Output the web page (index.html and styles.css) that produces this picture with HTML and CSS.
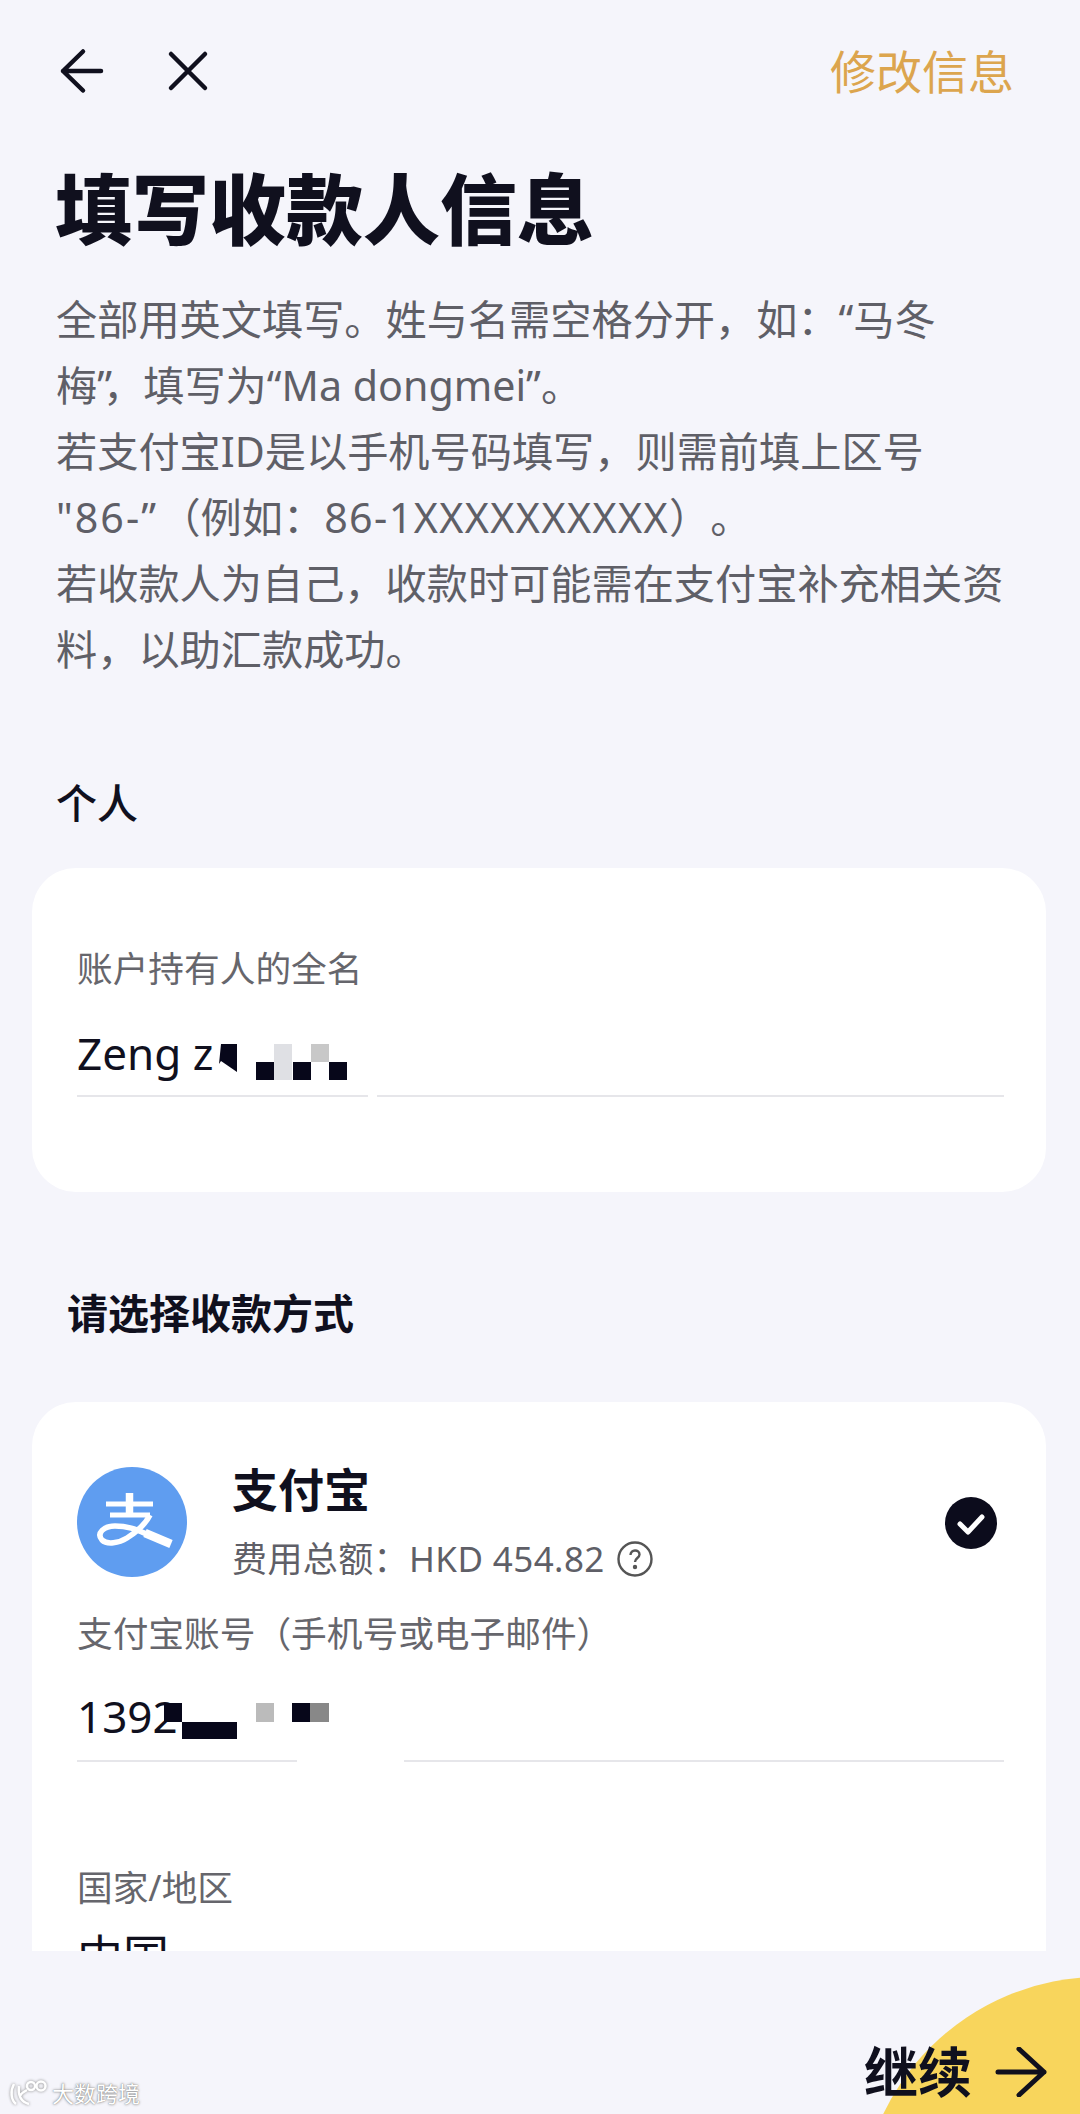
FILE: index.html
```html
<!DOCTYPE html>
<html lang="zh-CN">
<head>
  <meta charset="UTF-8">
  <title>填写收款人信息</title>
  <link rel="stylesheet" href="styles.css">
</head>
<body>
  <div class="page">
    <main class="content">
      <header class="topbar">
        <div class="topbar-icons">
          <svg class="icon-back" viewBox="0 0 48 48" width="48" height="48" fill="none" stroke="#10101e" stroke-width="4.5" stroke-linecap="round" stroke-linejoin="round"><path d="M5 24H43M25 4.5 5 24l20 19.5"/></svg>
          <svg class="icon-close" viewBox="0 0 48 48" width="48" height="48" fill="none" stroke="#10101e" stroke-width="4.5" stroke-linecap="round"><path d="M7 7 41 41M41 7 7 41"/></svg>
        </div>
        <span class="edit-link">修改信息</span>
      </header>

      <h1 class="title">填写收款人信息</h1>
      <p class="intro">全部用英文填写。姓与名需空格分开，如：“马冬<br>梅<span class="tight">”，</span>填写为“Ma dongmei”。<br>若支付宝ID是以手机号码填写，则需前填上区号<br><span class="quoted">"86-”</span><span class="gap-paren">（</span>例如：<span class="spaced">86-1XXXXXXXXXX</span><span class="untrimmed">）。</span><br>若收款人为自己，收款时可能需在支付宝补充相关资<br>料，以助汇款成功。</p>

      <h2 class="section-title">个人</h2>
      <section class="card card-person">
        <div class="field-label">账户持有人的全名</div>
        <div class="field-value value-name">
          <span>Zeng z</span>
          <svg class="mosaic" viewBox="0 0 128 36" width="128" height="36">
            <path d="M2 0H18V28L2 17 0 20Z" fill="#07071a"/>
            <rect x="37" y="18" width="18" height="18" fill="#07071a"/>
            <rect x="55" y="0" width="18" height="36" fill="#dfe0e4"/>
            <rect x="74" y="18" width="18" height="18" fill="#07071a"/>
            <rect x="92" y="0" width="18" height="18" fill="#c8c8c8"/>
            <rect x="110" y="18" width="18" height="18" fill="#07071a"/>
          </svg>
        </div>
        <div class="field-line line-name"><i></i><i></i></div>
      </section>

      <h2 class="section-title section-method">请选择收款方式</h2>
      <section class="card card-method">
        <div class="method">
          <svg class="alipay" viewBox="0 0 110 110" width="110" height="110">
            <circle cx="55" cy="55" r="55" fill="#5f9df0"/>
            <g fill="none" stroke="#fff">
              <path d="M29 37H76M33 48H73" stroke-width="5"/>
              <path d="M52.500 26V46" stroke-width="7.5"/>
              <path d="M73 48C68 58 58 66 50 71 42 76 30 78 25 73 19 66 27 59 38 59 52 59 60 63 72 68" stroke-width="5.500"/>
              <path d="M68 66 94 77" stroke-width="8.500"/>
            </g>
          </svg>
          <div class="method-info">
            <div class="method-name">支付宝</div>
            <div class="method-fee">费用总额：HKD 454.82
              <svg class="icon-help" viewBox="0 0 36 36" width="36" height="36" fill="none" stroke="#555" stroke-width="2.4"><circle cx="18" cy="18" r="16.5"/><path d="M13.5 14c0-6 9-6 9-.5 0 3.500-4.500 3.500-4.500 7.500"/><circle cx="18" cy="26" r="1" fill="#555"/></svg>
            </div>
          </div>
          <svg class="icon-check" viewBox="0 0 52 52" width="52" height="52"><circle cx="26" cy="26" r="26" fill="#0c0c1c"/><path d="M15 27l8 8 14-15" fill="none" stroke="#fff" stroke-width="5" stroke-linecap="round" stroke-linejoin="round"/></svg>
        </div>
        <div class="field-label label-account">支付宝账号（手机号或电子邮件）</div>
        <div class="field-value value-account">
          <span>1392</span>
          <svg class="mosaic mosaic-account" viewBox="0 0 165 36" width="165" height="36">
            <rect x="0" y="0" width="18" height="19" fill="#07071a"/>
            <rect x="18" y="19" width="55" height="17" fill="#07071a"/>
            <rect x="92" y="0" width="18" height="19" fill="#bbb"/>
            <rect x="128" y="0" width="18" height="19" fill="#07071a"/>
            <rect x="146" y="0" width="19" height="19" fill="#888"/>
          </svg>
        </div>
        <div class="field-line line-account"><i></i><i></i></div>
        <div class="field-label label-country">国家/地区</div>
        <div class="field-value value-country">中国</div>
      </section>
    </main>

    <footer class="bottom">
      <div class="blob"></div>
      <div class="watermark">
        <svg viewBox="0 0 40 26" width="40" height="26" fill="none" stroke="#fff" stroke-width="2.500"><path d="M5 4C1 11 2 20 7 24M10 6C9 15 12 22 20 24M18 10C14 12 12 14 11 16"/><circle cx="22" cy="6" r="4"/><circle cx="32" cy="6" r="4.500"/></svg>
        <span>大数跨境</span>
      </div>
      <div class="next">
        <span>继续</span>
        <svg viewBox="0 0 52 50" width="52" height="50" fill="none" stroke="#10101e" stroke-width="5" stroke-linecap="round" stroke-linejoin="round"><path d="M3 25H49M24 2 49 25 24 48"/></svg>
      </div>
    </footer>
  </div>
</body>
</html>
```

FILE: styles.css
```css
* { box-sizing: border-box; }
html, body { margin: 0; padding: 0; }
body {
  background: #f5f5fb;
  color: #10101e;
  font-family: "Noto Sans", "Noto Sans CJK SC", sans-serif;
}
.page {
  width: 1080px;
  height: 2114px;
  overflow: hidden;
}
.content {
  height: 1951px;
  overflow: hidden;
}

.topbar {
  height: 142px;
  padding: 0 66px 0 58px;
  display: flex;
  justify-content: space-between;
  align-items: center;
}
.topbar-icons {
  display: flex;
  gap: 58px;
}
.edit-link {
  margin-top: -4px;
  font-size: 46px;
  color: #dca54e;
}

.title {
  margin: 20px 0 0 55px;
  font-size: 77px;
  line-height: 96px;
  font-weight: 900;
}
.intro {
  margin: 28px 0 0 56px;
  font-size: 41.200px;
  line-height: 66px;
  color: #5f5f67;
}
.tight { letter-spacing: -9px; margin-right: 8px; }
.quoted { letter-spacing: 2px; }
.spaced { letter-spacing: 1.400px; }
.gap-paren { margin-left: 22px; }
.untrimmed { text-spacing-trim: space-all; }
.section-title {
  margin: 93px 0 0 56px;
  font-size: 41px;
  line-height: 56px;
  font-weight: 500;
}
.section-method {
  margin: 93px 0 0 67px;
  font-weight: 700;
}

.card {
  margin: 37px 34px 0 32px;
  padding: 75px 42px 0 45px;
  height: 324px;
  background: #fff;
  border-radius: 44px;
}
.card-method {
  margin-top: 61px;
  padding-top: 65px;
  height: 600px;
}

.field-label {
  font-size: 35.700px;
  line-height: 50px;
  color: #66666c;
}
.field-value {
  display: flex;
  align-items: flex-start;
  font-size: 44px;
  line-height: 60px;
  color: #10101e;
}
.value-name { margin-top: 30px; height: 72px; }
.value-name .mosaic { margin: 21px 0 0 6px; }
.value-account { margin-top: 28px; height: 74px; }
.mosaic-account { margin: 17px 0 0 -14px; }
.value-country { margin-top: 13px; font-size: 46px; }

.field-line {
  display: flex;
  justify-content: space-between;
}
.field-line i {
  display: block;
  height: 2px;
  background: #e6e6ea;
}
.line-name i:first-child { width: 291px; }
.line-name i:last-child { width: 627px; }
.line-account i:first-child { width: 220px; }
.line-account i:last-child { width: 600px; }

.method {
  display: flex;
  align-items: flex-start;
  height: 110px;
}
.alipay { flex: none; }
.method-info {
  margin-left: 45px;
  flex: 1;
}
.method-name {
  margin-top: -3px;
  font-size: 46px;
  line-height: 50px;
  font-weight: 700;
}
.method-fee {
  margin-top: 23px;
  display: flex;
  align-items: center;
  gap: 12px;
  font-size: 35px;
  line-height: 44px;
  letter-spacing: 0.400px;
  color: #5f5f67;
}
.icon-check {
  margin: 30px 7px 0 0;
}
.label-account { margin-top: 31px; }
.label-country { margin-top: 100px; }

.bottom {
  position: relative;
  height: 163px;
  padding: 0 33px 0 9px;
  display: flex;
  justify-content: space-between;
  align-items: flex-end;
}
.blob {
  position: absolute;
  left: 860px;
  top: 26px;
  width: 480px;
  height: 480px;
  border-radius: 50%;
  background: #f8d55c;
}
.watermark {
  margin-bottom: 8px;
  display: flex;
  align-items: flex-end;
  gap: 3px;
  font-size: 22px;
  line-height: 26px;
  color: #fff;
  text-shadow: 0 0 1px #777, 0 0 3px #888;
}
.watermark svg {
  filter: drop-shadow(0 0 1.500px #888);
}
.next {
  position: relative;
  margin-bottom: 17px;
  display: flex;
  align-items: center;
  gap: 23px;
  font-size: 54px;
  line-height: 50px;
  font-weight: 700;
}
```
